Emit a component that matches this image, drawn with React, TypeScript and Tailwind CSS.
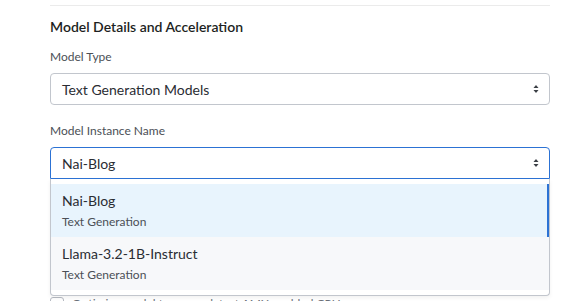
import type { ReactNode } from "react";

function Arrows() {
  return (
    <svg width="6" height="10" viewBox="0 0 6 10" className="shrink-0">
      <path d="M3 1 L5.5 4 L0.5 4 Z" fill="#3b3f45" />
      <path d="M3 9 L5.5 6 L0.5 6 Z" fill="#3b3f45" />
    </svg>
  );
}

function Label({ children }: { children: ReactNode }) {
  return <div className="text-[12px] leading-[16px] text-[#4b4f56]">{children}</div>;
}

const OPTIONS = [
  { name: "Nai-Blog", type: "Text Generation", selected: true },
  { name: "Llama-3.2-1B-Instruct", type: "Text Generation", selected: false },
];

export default function App() {
  return (
    <div className="h-[301px] w-[574px] overflow-hidden bg-white font-['Lato',sans-serif]">
      <div className="ml-[50px] w-[500px] pt-[5px]">
        <div className="border-t border-[#ebebeb]" />
        <h2 className="mt-[11px] text-[14px] font-semibold leading-[20px] text-[#1d1f22]">
          Model Details and Acceleration
        </h2>

        <div className="mt-[12px]">
          <Label>Model Type</Label>
        </div>
        <div className="mt-[8px] flex h-[32px] items-center justify-between rounded-[4px] border border-[#c2c6cd] pl-[11px] pr-[10px] text-[14px] text-[#2a2d33]">
          <span>Text Generation Models</span>
          <Arrows />
        </div>

        <div className="mt-[18px]">
          <Label>Model Instance Name</Label>
        </div>
        <div className="relative mt-[8px]">
          <div className="flex h-[32px] items-center justify-between rounded-t-[4px] border border-[#2c72d4] pl-[11px] pr-[10px] text-[14px] text-[#2a2d33]">
            <span>Nai-Blog</span>
            <Arrows />
          </div>
          <div className="absolute left-0 right-0 top-full z-10 rounded-b-[4px] border border-t-0 border-[#c2c6cd] bg-white py-[5px] shadow-[0_2px_4px_rgba(0,0,0,0.06)]">
            {OPTIONS.map((o) => (
              <div
                key={o.name}
                className={`pb-[7px] pl-[11px] pt-[7px] ${
                  o.selected
                    ? "border-r-2 border-[#2c72d4] bg-[#e8f4fd]"
                    : "bg-[#f7f8fa]"
                }`}
              >
                <div className="text-[14px] leading-[20px] text-[#2a2d33]">{o.name}</div>
                <div className="mt-[3px] text-[12px] leading-[16px] text-[#4b4f56]">{o.type}</div>
              </div>
            ))}
          </div>
        </div>
        <div className="mt-[118px] flex items-start gap-[8px]">
          <span className="h-[14px] w-[14px] shrink-0 rounded-[3px] border border-[#b6bac2]" />
          <span className="text-[12px] leading-[14px] text-[#6b7079]">
            Optimize model to run on latest AMX enabled CPU
          </span>
        </div>
      </div>
    </div>
  );
}
